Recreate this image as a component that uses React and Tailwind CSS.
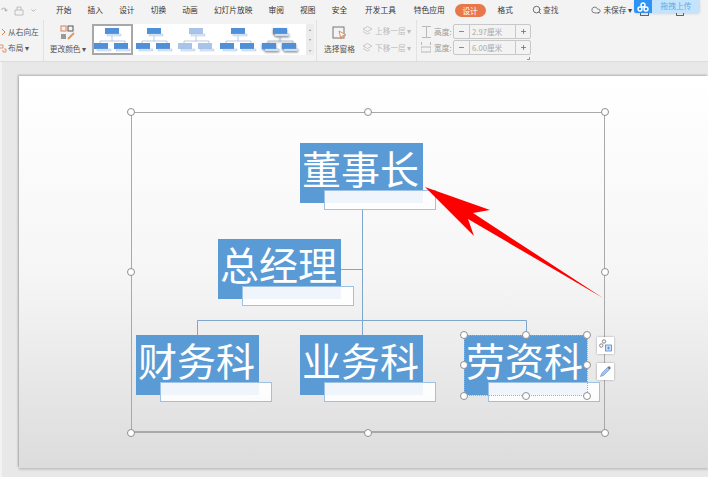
import { Search, Cloud, Plus, Minus, ChevronDown } from 'lucide-react';

const cjk = "font-['Noto_Sans_CJK_SC','Noto_Sans',sans-serif]";

function Tab({ children }) {
  return <span className="text-[#333] whitespace-nowrap">{children}</span>;
}

function Thumb({ fade, shadow, selected }) {
  const fill = fade ? '#a9c4e8' : '#4f90d9';
  return (
    <div className={`w-[41px] h-[31px] shrink-0 flex items-center justify-center ${selected ? 'border-2 border-[#a8a8a8]' : ''}`}>
      <svg width="37" height="26" viewBox="0 0 37 26" className={shadow ? 'drop-shadow-[0_1px_1px_rgba(0,0,0,0.5)]' : ''}>
        <path d="M18 8V14M6 14H31M6 14V16M31 14V16" stroke="#8aa8cc" strokeWidth="0.6" fill="none" />
        <rect x="11" y="1" width="14" height="6" fill={fill} />
        <rect x="13" y="7" width="14" height="2" fill="#dfe9f7" stroke="#9cbce4" strokeWidth="0.4" />
        <rect x="0" y="16" width="14" height="6" fill={fill} />
        <rect x="3" y="22" width="14" height="2" fill="#dfe9f7" stroke="#9cbce4" strokeWidth="0.4" />
        <rect x="20" y="16" width="14" height="6" fill={fill} />
        <rect x="22" y="22" width="14" height="2" fill="#dfe9f7" stroke="#9cbce4" strokeWidth="0.4" />
      </svg>
    </div>
  );
}

function Spinner({ label, value, icon }) {
  return (
    <div className="flex items-center h-[15px]">
      <div className="w-[14px] mr-[1px] flex justify-center">{icon}</div>
      <span className="w-[19px] text-[#999]">{label}</span>
      <div className="flex w-[78px] h-[15px] border border-[#c8c8c8] rounded-[2px] items-center">
        <div className="w-[15px] flex justify-center"><Minus size={7} strokeWidth={3} className="text-[#777]" /></div>
        <div className="flex-1 h-full border-x border-[#c8c8c8] pl-[2px] leading-[13px] text-[#aaa]">{value}</div>
        <div className="w-[14px] flex justify-center"><Plus size={7} strokeWidth={3} className="text-[#777]" /></div>
      </div>
    </div>
  );
}

function LayerIcon() {
  return (
    <svg width="11" height="11" viewBox="0 0 11 11" fill="none" stroke="#bdbdbd" strokeWidth="0.8">
      <path d="M1 4L5.5 1.5L10 4L5.5 6.5Z" />
      <path d="M1 6.5L5.5 9L8 7.5" />
    </svg>
  );
}

function Node({ pos, text }) {
  return (
    <div className={`absolute w-[123px] h-[60px] bg-[#5b9bd5] ${pos}`}>
      <div className={`${cjk} font-normal text-white text-[39px] leading-[46px] whitespace-nowrap pl-[2px] pt-[1px]`}>{text}</div>
      <div className="absolute left-[24px] top-[47px] w-[112px] h-[20px] bg-white/90 border border-[#9cc3e6]" />
    </div>
  );
}

function Handle({ pos }) {
  return <div className={`absolute w-[8px] h-[8px] rounded-full bg-white border border-[#8f8f8f] -translate-x-1/2 -translate-y-1/2 ${pos}`} />;
}

export default function App() {
  return (
    <div className={`${cjk} w-[708px] h-[477px] overflow-hidden flex flex-col bg-[#e8e8e8] relative`}>
      {/* tab row */}
      <div className="h-[20px] bg-[#f3f3f3] flex items-center text-[7.7px] shrink-0 relative">
        <div className="w-[56px] flex items-center gap-[6px] pl-[1px] text-[#aaa]">
          <span className="text-[8px]">↷</span>
          <svg width="10" height="11" viewBox="0 0 10 11" fill="none" stroke="#b0b0b0" strokeWidth="0.8"><path d="M1 5H9V10H1ZM3 5V2H7V5" /></svg>
          <ChevronDown size={7} className="text-[#888]" />
        </div>
        <div className="flex items-center gap-[16.2px]">
          <Tab>开始</Tab>
          <Tab>插入</Tab>
          <Tab>设计</Tab>
          <Tab>切换</Tab>
          <Tab>动画</Tab>
          <Tab>幻灯片放映</Tab>
          <Tab>审阅</Tab>
          <Tab>视图</Tab>
          <Tab>安全</Tab>
        </div>
        <div className="ml-[18px] flex items-center"><Tab>开发工具</Tab></div>
        <div className="ml-[18px]"><Tab>特色应用</Tab></div>
        <div className="ml-[10px] w-[31px] h-[13px] rounded-full bg-[#e8784a] text-white text-center leading-[13px]">设计</div>
        <div className="ml-[12px]"><Tab>格式</Tab></div>
        <div className="ml-[19px] flex items-center gap-[1px] text-[#555]"><Search size={10} />查找</div>
        <div className="ml-[33px] flex items-center gap-[2px] text-[#444]"><Cloud size={10} className="text-[#666]" />未保存 ▾</div>
        {/* what sticks out under the upload badge */}
        <div className="absolute left-[640px] top-[13px] w-[9px] h-[3px] border-x border-b border-[#666] rounded-b-[1px]" />
        <div className="absolute left-[676px] top-[13px] w-[8px] h-[3px] border-x border-b border-[#666] rounded-b-[1px]" />
        <div className="absolute left-[634px] top-0 w-[66px] h-[13px] flex rounded-b-[2px] overflow-hidden shadow-sm">
          <div className="w-[18px] bg-[#2f93f5] flex items-center justify-center">
            <svg width="12" height="10" viewBox="0 0 12 10" fill="none" stroke="#fff" strokeWidth="1.4"><circle cx="6" cy="3" r="2" /><circle cx="3" cy="7" r="2" /><circle cx="9" cy="7" r="2" /></svg>
          </div>
          <div className="flex-1 bg-[#c4e4fd] text-[#6aa8dc] text-center leading-[12px]">拖拽上传</div>
        </div>
      </div>

      {/* ribbon */}
      <div className="h-[42px] bg-[#f3f3f3] border-b border-[#dcdcdc] flex text-[7.7px] shrink-0 text-[#555] relative">
        <div className="w-[44px] border-r border-[#e2e2e2] pl-[8px] flex flex-col gap-[4.5px] pt-[6px]">
          <span>从右向左</span>
          <span>布局 ▾</span>
        </div>
        <svg className="absolute left-0 top-[8px]" width="7" height="8" viewBox="0 0 7 8" fill="none" stroke="#d9824f"><path d="M2 1L5 4L2 7" /></svg>
        <svg className="absolute left-0 top-[24px]" width="7" height="9" viewBox="0 0 7 9" fill="none" stroke="#d9824f" strokeWidth="0.8"><path d="M0 1H3V4H0M4 5H6V8H3V6" /></svg>
        <div className="w-[48px] flex flex-col items-center pt-[5px] gap-[2px]">
          <svg width="16" height="16" viewBox="0 0 16 16" fill="none">
            <rect x="1" y="1" width="5" height="5" stroke="#d9824f" />
            <rect x="8" y="1" width="5" height="5" stroke="#555" />
            <rect x="1" y="9" width="5" height="5" fill="#999" />
            <path d="M8 14L14 8" stroke="#e09a5a" strokeWidth="2" />
          </svg>
          <span className="whitespace-nowrap">更改颜色 ▾</span>
        </div>
        <div className="w-[222px] h-[31px] mt-[4px] bg-white flex items-center gap-[1px] relative rounded-[2px]">
          <Thumb selected />
          <Thumb />
          <Thumb fade />
          <Thumb />
          <Thumb shadow />
          <div className="absolute right-0 top-0 w-[8px] h-full bg-[#ececec] text-[#999] flex flex-col items-center justify-around text-[4px]">
            <span>▴</span><span>▾</span><span>▾</span>
          </div>
        </div>
        <div className="ml-[2px] w-[46px] border-l border-[#e2e2e2] flex flex-col items-center pt-[6px] gap-[2px]">
          <svg width="16" height="15" viewBox="0 0 16 15" fill="none">
            <rect x="1" y="1" width="11" height="11" stroke="#777" />
            <path d="M7 5L14 9L10 10L9 13Z" fill="#fff" stroke="#e08a5a" />
          </svg>
          <span className="whitespace-nowrap">选择窗格</span>
        </div>
        <div className="w-[54px] text-[#bbb] flex flex-col gap-[5px] pt-[5px]">
          <div className="flex items-center gap-[2px]"><LayerIcon />上移一层 ▾</div>
          <div className="flex items-center gap-[2px]"><LayerIcon />下移一层 ▾</div>
        </div>
        <div className="pl-[2px] border-l border-[#e2e2e2] pt-[4px] flex flex-col gap-[1px] relative w-[118px]">
          <Spinner
            label="高度:"
            value="2.97厘米"
            icon={<svg width="9" height="12" viewBox="0 0 9 12" fill="none" stroke="#aaa" strokeWidth="0.8"><path d="M0 .5H9M0 11.5H9M4.5 1V11" /></svg>}
          />
          <Spinner
            label="宽度:"
            value="6.00厘米"
            icon={<svg width="10" height="11" viewBox="0 0 10 11" fill="none" stroke="#aaa" strokeWidth="0.8"><path d="M.5 0V3M9.5 0V3M0 5H10V10H0Z" /></svg>}
          />
          <span className="absolute right-[4px] bottom-[1px] w-[3px] h-[3px] border-r border-b border-[#999]" />
        </div>
      </div>

      {/* slide area */}
      <div className="flex-1 min-h-0 pt-[14px] pl-[19px] pb-[9px] border-l-2 border-[#f3f3f3]">
        <div className="relative h-full -ml-[2px] bg-gradient-to-b from-white via-[#f6f6f6] to-[#dcdcdc] shadow-[-1px_-1px_2px_rgba(0,0,0,0.25),0_2px_2px_rgba(0,0,0,0.15)]">
          <svg className="absolute inset-0 w-full h-full" fill="none" stroke="#7fa6cc" strokeWidth="1">
            <path d="M343.5 134V244.5M322 193.5H343.5M178.5 259V244.5H507.5V259M343.5 244.5V259" />
          </svg>

          <div className="absolute left-[112px] top-[36px] w-[474px] h-[321px] border border-[#a9a9a9] border-b-2" />
          <Handle pos="left-[112px] top-[36px]" />
          <Handle pos="left-[349px] top-[36px]" />
          <Handle pos="left-[586px] top-[36px]" />
          <Handle pos="left-[112px] top-[196px]" />
          <Handle pos="left-[586px] top-[196px]" />
          <Handle pos="left-[112px] top-[357px]" />
          <Handle pos="left-[349px] top-[357px]" />
          <Handle pos="left-[586px] top-[357px]" />

          <Node pos="left-[281px] top-[67px]" text="董事长" />
          <Node pos="left-[199px] top-[163px]" text="总经理" />
          <Node pos="left-[117px] top-[259px]" text="财务科" />
          <Node pos="left-[281px] top-[259px]" text="业务科" />
          <Node pos="left-[445px] top-[259px]" text="劳资科" />

          <div className="absolute left-[445px] top-[259px] w-[124px] h-[61px] border border-dotted border-[#aaa]" />
          <Handle pos="left-[445px] top-[259px]" />
          <Handle pos="left-[507px] top-[259px]" />
          <Handle pos="left-[568px] top-[259px]" />
          <Handle pos="left-[445px] top-[289px]" />
          <Handle pos="left-[568px] top-[289px]" />
          <Handle pos="left-[445px] top-[320px]" />
          <Handle pos="left-[507px] top-[320px]" />
          <Handle pos="left-[568px] top-[320px]" />

          <div className="absolute left-[578px] top-[261px] w-[17px] h-[17px] bg-white shadow-[0_0_2px_rgba(0,0,0,0.35)] flex items-center justify-center">
            <svg width="13" height="13" viewBox="0 0 13 13" fill="none" stroke="#666" strokeWidth="0.8">
              <circle cx="5" cy="2.5" r="1.7" />
              <circle cx="2.3" cy="6.5" r="1.7" />
              <rect x="6.5" y="6" width="6" height="6" stroke="#4a8ad4" fill="#cfe0f5" />
              <path d="M9.5 7.5V10.5M8 9H11" stroke="#4a8ad4" />
            </svg>
          </div>
          <div className="absolute left-[578px] top-[287px] w-[17px] h-[17px] bg-white shadow-[0_0_2px_rgba(0,0,0,0.35)] flex items-center justify-center">
            <svg width="13" height="13" viewBox="0 0 13 13" fill="none">
              <path d="M1.5 11.5L3 8L8.5 2.5L10.5 4.5L5 10Z" fill="#a9c4ee" stroke="#6a8fca" strokeWidth="0.7" />
              <path d="M8.5 2.5L10 1L12 3L10.5 4.5Z" fill="#777" />
            </svg>
          </div>

          <svg className="absolute inset-0 w-full h-full" fill="#ff0000" stroke="none">
            <polygon points="406,111 471,134 454,137 584,222 449,143 455,160" />
          </svg>
        </div>
      </div>
    </div>
  );
}
